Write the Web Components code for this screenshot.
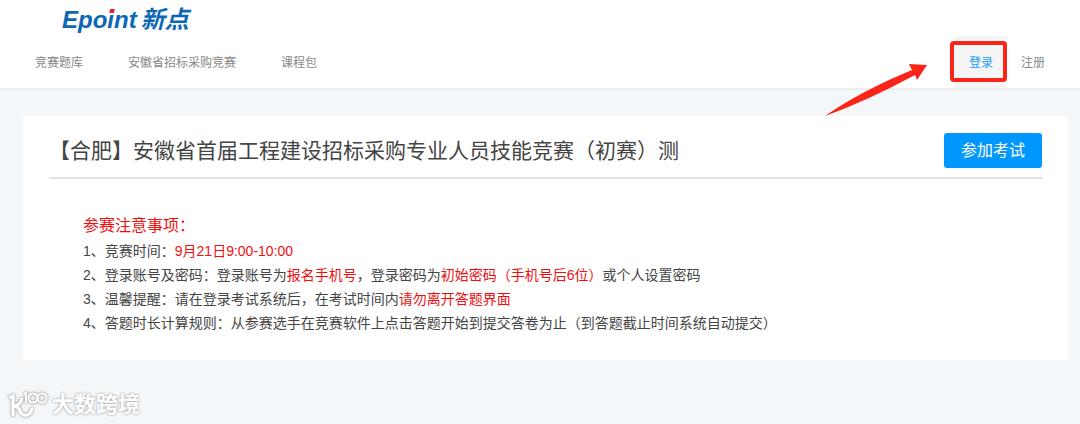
<!DOCTYPE html>
<html lang="zh-CN">
<head>
<meta charset="utf-8">
<title>新点竞赛</title>
<style>
    body{
        margin:0;
        background:#f3f7fa;
        color:#444;
        font-family:"Liberation Sans","Noto Sans CJK SC",sans-serif;
        font-size:14px;
    }
</style>
</head>
<body>
<exam-header>
    <nav-link slot="menu" href="#bank">竞赛题库</nav-link>
    <nav-link slot="menu" href="#contest">安徽省招标采购竞赛</nav-link>
    <nav-link slot="menu" href="#course">课程包</nav-link>
    <nav-link slot="user" href="#login" active>登录<login-pointer slot="mark"></login-pointer></nav-link>
    <nav-link slot="user" href="#register">注册</nav-link>
</exam-header>
<main>
    <exam-card>
        <span slot="title">【合肥】安徽省首届工程建设招标采购专业人员技能竞赛（初赛）测</span>
        <span slot="action">参加考试</span>
        <exam-notice>
            <span slot="title">参赛注意事项：</span>
            <notice-line>1、竞赛时间：<em>9月21日9:00-10:00</em></notice-line>
            <notice-line>2、登录账号及密码：登录账号为<em>报名手机号</em>，登录密码为<em>初始密码（手机号后6位）</em>或个人设置密码</notice-line>
            <notice-line>3、温馨提醒：请在登录考试系统后，在考试时间内<em>请勿离开答题界面</em></notice-line>
            <notice-line>4、答题时长计算规则：从参赛选手在竞赛软件上点击答题开始到提交答卷为止（到答题截止时间系统自动提交）</notice-line>
        </exam-notice>
    </exam-card>
</main>
<page-mark>大数跨境</page-mark>

<script>
class BrandLogo extends HTMLElement{
    constructor(){
        super();
        this.attachShadow({ mode: "open" });
        this.shadowRoot.innerHTML = `
        <style>
            :host{ display:block; }
            a{
                position:relative;
                display:inline-flex;
                align-items:baseline;
                gap:4px;
                color:#0c68b4;
                font-weight:bold;
                font-style:italic;
                font-size:24px;
                line-height:36px;
                text-decoration:none;
            }
            svg{
                position:absolute;
                left:46px;
                top:6px;
            }
        </style>
        <a href="#home"><span>Epoint</span><span>新点</span>
            <svg width="8" height="6" viewBox="0 0 8 6" aria-hidden="true">
                <path d="M0 0H8V6H0Z" fill="#fff"/>
                <path d="M2.2 1H6.8L5.8 5H1.2Z" fill="#e2232e"/>
            </svg>
        </a>`;
    }
}
customElements.define("brand-logo", BrandLogo);

class ExamHeader extends HTMLElement{
    constructor(){
        super();
        this.attachShadow({ mode: "open" });
        this.shadowRoot.innerHTML = `
        <style>
            :host{
                display:block;
                background:#fff;
                border-bottom:2px solid #ececec;
            }
            brand-logo{
                height:34px;
                padding:2px 0 0 62px;
            }
            nav{
                display:flex;
                justify-content:space-between;
                padding:0 21px;
            }
            div{ display:flex; }
            .menu{ gap:17px; }
        </style>
        <brand-logo></brand-logo>
        <nav>
            <div class="menu"><slot name="menu"></slot></div>
            <div><slot name="user"></slot></div>
        </nav>`;
    }
}
customElements.define("exam-header", ExamHeader);

class NavLink extends HTMLElement{
    constructor(){
        super();
        this.attachShadow({ mode: "open" });
        this.shadowRoot.innerHTML = `
        <style>
            :host{
                display:block;
                position:relative;
            }
            a{
                display:block;
                padding:2px 14px 0;
                color:#888;
                font-size:12px;
                line-height:50px;
                text-decoration:none;
            }
            :host([active]) a{
                color:#1c9df5;
                background:#f5f5f5;
            }
        </style>
        <a><slot></slot></a>
        <slot name="mark"></slot>`;
    }
    connectedCallback(){
        this.shadowRoot.querySelector("a").href = this.getAttribute("href");
    }
}
customElements.define("nav-link", NavLink);

// red frame round the login link, with the arrow that leads to it
class LoginPointer extends HTMLElement{
    constructor(){
        super();
        this.attachShadow({ mode: "open" });
        this.shadowRoot.innerHTML = `
        <style>
            :host{
                position:absolute;
                right:0;
                top:5px;
                pointer-events:none;
            }
            svg{ display:block; }
        </style>
        <svg width="182" height="78" viewBox="0 0 182 78" aria-hidden="true">
            <rect x="127" y="2" width="53" height="37" rx="2" fill="none" stroke="#fb2418" stroke-width="4"/>
            <path d="M0 75Q36 50 87 29L84 23L102 24L92 39L90 34Q42 60 0 75Z" fill="#fb2418"/>
        </svg>`;
    }
}
customElements.define("login-pointer", LoginPointer);

class ExamCard extends HTMLElement{
    constructor(){
        super();
        this.attachShadow({ mode: "open" });
        this.shadowRoot.innerHTML = `
        <style>
            :host{
                display:block;
                margin:26px 12px 0 23px;
                padding:17px 26px 25px;
                background:#fff;
            }
            header{
                display:flex;
                align-items:center;
                justify-content:space-between;
                padding-bottom:9px;
                border-bottom:2px solid #e3e3e3;
            }
            h1{
                margin:0;
                font-size:21px;
                font-weight:normal;
                line-height:35px;
            }
            button{
                padding:0 17px;
                border:0;
                border-radius:3px;
                background:#0098ff;
                color:#fff;
                font-family:inherit;
                font-size:16px;
                line-height:35px;
                white-space:nowrap;
            }
        </style>
        <header>
            <h1><slot name="title"></slot></h1>
            <button type="button"><slot name="action"></slot></button>
        </header>
        <slot></slot>`;
    }
}
customElements.define("exam-card", ExamCard);

class ExamNotice extends HTMLElement{
    constructor(){
        super();
        this.attachShadow({ mode: "open" });
        this.shadowRoot.innerHTML = `
        <style>
            :host{
                display:block;
                padding:34px 34px 0;
            }
            h2{
                margin:0;
                color:#f00f0f;
                font-size:16px;
                font-weight:normal;
                line-height:26px;
            }
        </style>
        <h2><slot name="title"></slot></h2>
        <slot></slot>`;
    }
}
customElements.define("exam-notice", ExamNotice);

class NoticeLine extends HTMLElement{
    constructor(){
        super();
        this.attachShadow({ mode: "open" });
        this.shadowRoot.innerHTML = `
        <style>
            :host{
                display:block;
                line-height:24px;
            }
            ::slotted(em){
                color:#f00f0f;
                font-style:normal;
            }
        </style>
        <slot></slot>`;
    }
}
customElements.define("notice-line", NoticeLine);

class PageMark extends HTMLElement{
    constructor(){
        super();
        this.attachShadow({ mode: "open" });
        this.shadowRoot.innerHTML = `
        <style>
            :host{
                display:flex;
                align-items:center;
                gap:4px;
                padding:27px 8px 0;
                color:#fff;
                font-size:22px;
                font-weight:bold;
                line-height:36px;
                text-shadow:0 0 2px #aaa, 0 0 3px #bbb;
            }
            svg{
                filter:drop-shadow(0 0 1px #aaa) drop-shadow(0 0 1px #bbb);
            }
        </style>
        <svg width="40" height="32" viewBox="0 0 40 32" fill="none" stroke="#fff" aria-hidden="true">
            <path d="M1 9L5 7V27" stroke-width="3"/>
            <path d="M14 9Q13 16 6 17Q11 18 12 22Q14 27 19 26Q23 25 24 19" stroke-width="3"/>
            <path d="M16 5L18 4V14" stroke-width="2"/>
            <circle cx="25" cy="9" r="4.5" stroke-width="2"/>
            <circle cx="34" cy="9" r="4.5" stroke-width="2"/>
        </svg>
        <span><slot></slot></span>`;
    }
}
customElements.define("page-mark", PageMark);
</script>
</body>
</html>
